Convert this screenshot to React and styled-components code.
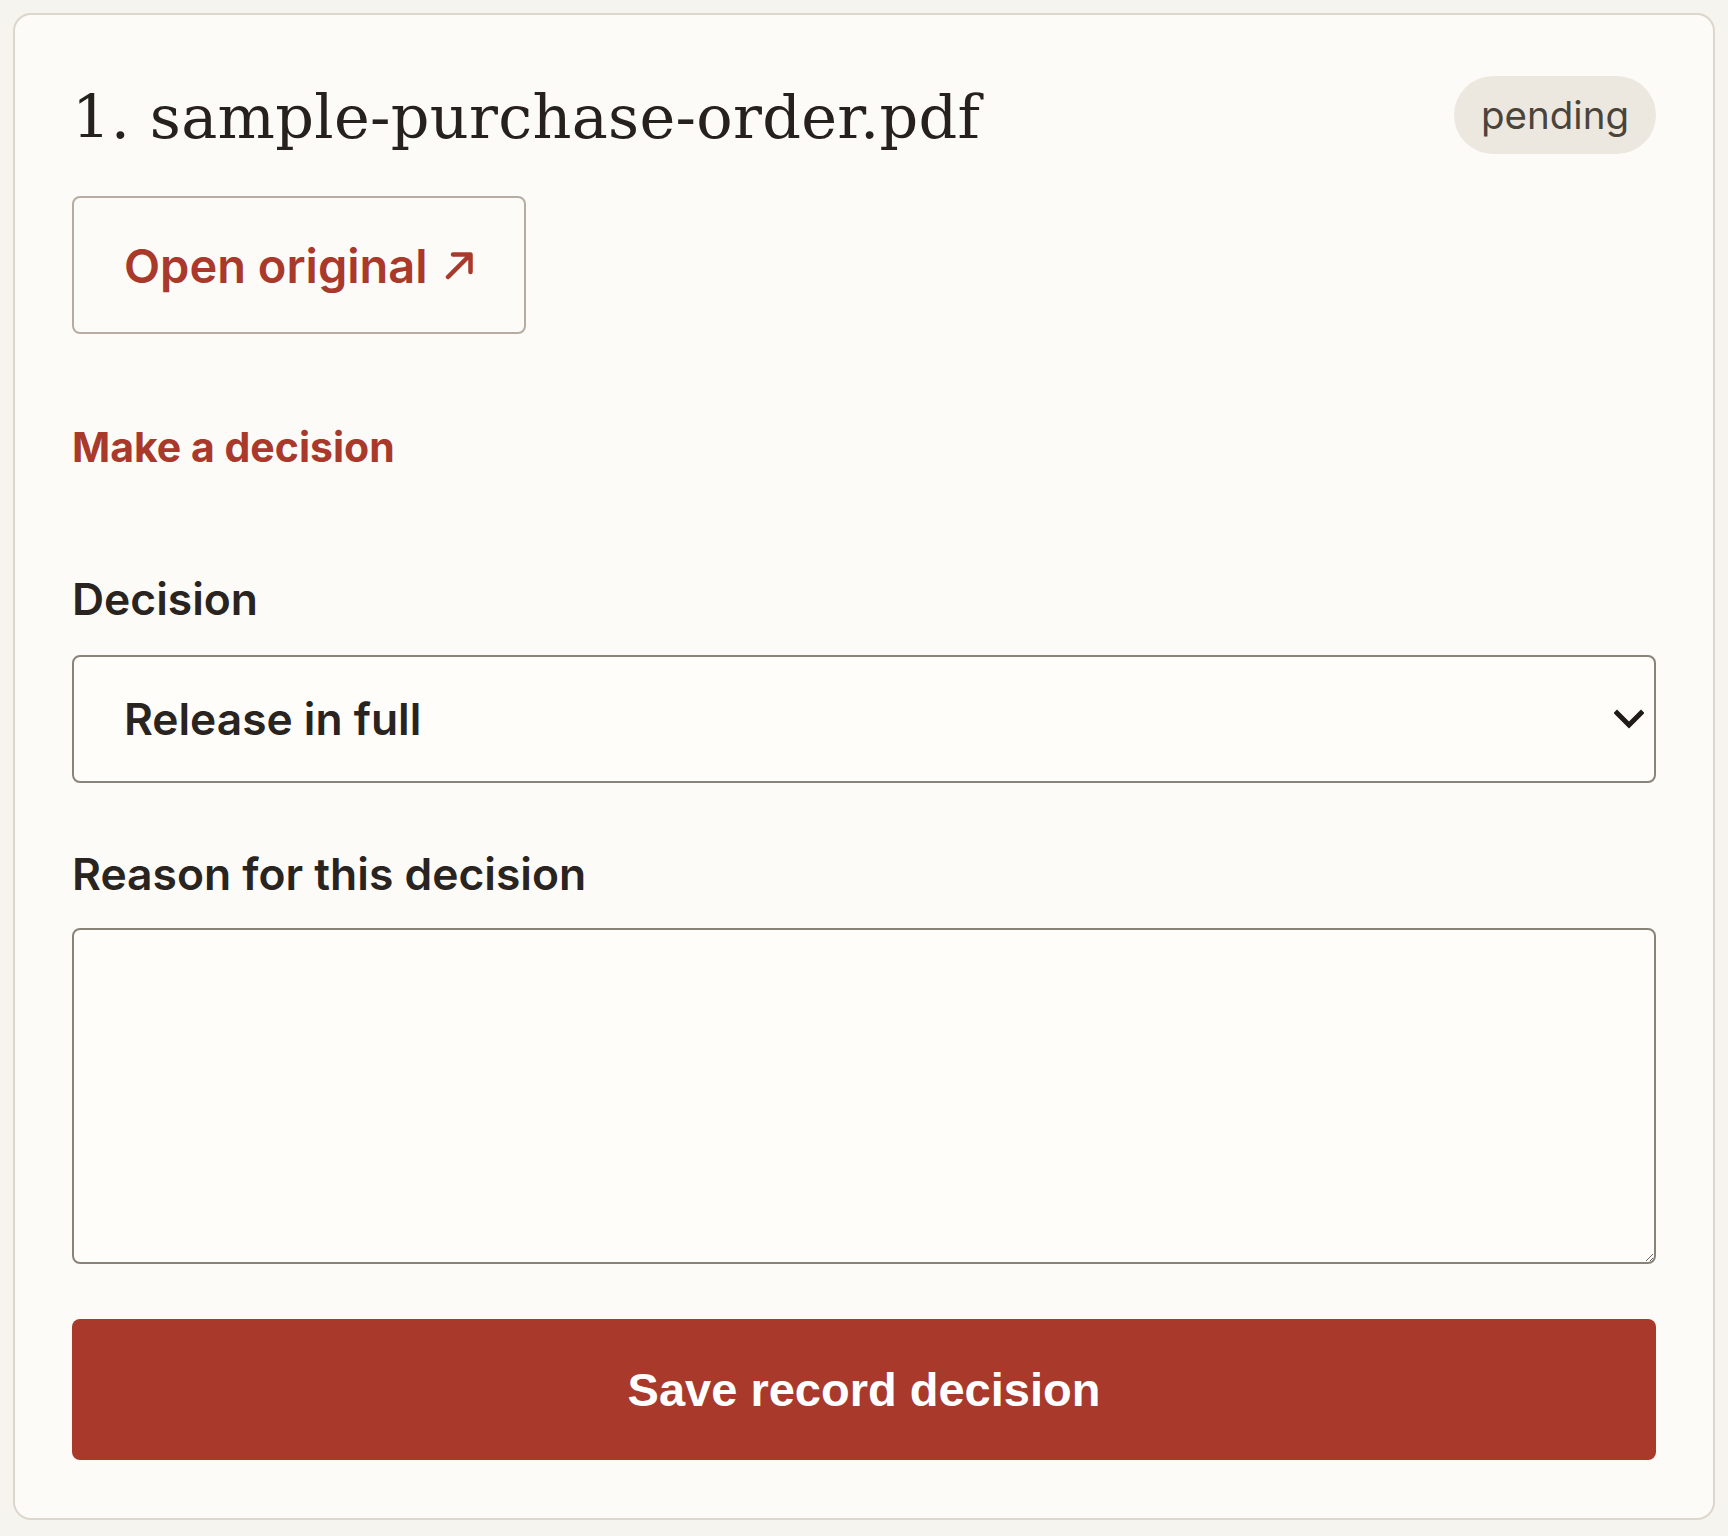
import React from "react";
import styled, { createGlobalStyle } from "styled-components";

const Global = createGlobalStyle`
  html, body { margin: 0; padding: 0; }
  body {
    background: #f6f4ef;
    padding: 13px;
    font-family: Inter, "Noto Sans", sans-serif;
    color: #29241f;
  }
  * { box-sizing: border-box; }
`;

const Card = styled.section`
  background: #fdfbf7;
  border: 2px solid #dcd7cc;
  border-radius: 18px;
  padding: 61px 57px 58px;
  display: flex;
  flex-direction: column;
`;

const Header = styled.div`
  display: flex;
  align-items: center;
  justify-content: space-between;
  min-height: 78px;
`;

const Title = styled.h2`
  margin: 0;
  padding-top: 4px;
  font-family: "DejaVu Serif", "Liberation Serif", serif;
  font-weight: 400;
  font-size: 60.5px;
  line-height: 1.2;
  letter-spacing: 0.3px;
  color: #26211c;
`;

const Pill = styled.span`
  display: inline-flex;
  align-items: center;
  height: 78px;
  padding: 0 27px;
  border-radius: 39px;
  background: #ede8df;
  color: #4b443b;
  font-size: 38.5px;
  font-weight: 400;
`;

const OpenLink = styled.a`
  align-self: flex-start;
  margin-top: 42px;
  display: inline-flex;
  align-items: center;
  gap: 15px;
  height: 138px;
  padding: 0 48px 0 50px;
  border: 2px solid #b6ada2;
  border-radius: 8px;
  color: #a8392b;
  font-size: 47px;
  font-weight: 600;
  text-decoration: none;
`;

const SectionTitle = styled.h3`
  margin: 90px 0 0;
  color: #a8392b;
  font-size: 41px;
  font-weight: 700;
  line-height: 46px;
`;

const Field = styled.div`
  display: flex;
  flex-direction: column;
  gap: ${(p) => p.$gap}px;
  margin-top: ${(p) => p.$top}px;
`;

const Label = styled.label`
  font-size: 44.4px;
  font-weight: 600;
  line-height: 52px;
  color: #29241f;
`;

const SelectWrap = styled.div`
  position: relative;
`;

const Select = styled.select`
  appearance: none;
  width: 100%;
  height: 128px;
  padding: 0 80px 0 50px;
  border: 2px solid #8a8379;
  border-radius: 8px;
  background: #fefdfa;
  color: #29241f;
  font-family: Inter, "Noto Sans", sans-serif;
  font-size: 44.3px;
  font-weight: 600;
  outline: none;
`;

const Chevron = styled.svg`
  position: absolute;
  right: 12px;
  top: 50%;
  transform: translateY(-50%);
  pointer-events: none;
`;

const TextArea = styled.textarea`
  width: 100%;
  height: 336px;
  border: 2px solid #8a8379;
  border-radius: 8px;
  background: #fefdfa;
  font-family: Inter, "Noto Sans", sans-serif;
  font-size: 40px;
  padding: 20px 24px;
  resize: vertical;
  outline: none;
  display: block;
`;

const SaveButton = styled.button`
  margin-top: 55px;
  height: 141px;
  width: 100%;
  border: none;
  border-radius: 8px;
  background: #a8392b;
  color: #ffffff;
  font-family: "Liberation Sans", Arial, sans-serif;
  font-size: 47px;
  font-weight: 700;
  cursor: pointer;
`;

export default function App() {
  return (
    <>
      <Global />
      <Card>
        <Header>
          <Title>1. sample-purchase-order.pdf</Title>
          <Pill>pending</Pill>
        </Header>
        <OpenLink href="#">
          Open original
          <svg width="33" height="33" viewBox="0 0 33 33" fill="none">
            <path d="M5 28 L27 6 M10 5.5 H27.5 V23" stroke="#a8392b" strokeWidth="4.5" strokeLinecap="round" strokeLinejoin="round" />
          </svg>
        </OpenLink>
        <SectionTitle>Make a decision</SectionTitle>
        <Field $top={103} $gap={30}>
          <Label htmlFor="decision">Decision</Label>
          <SelectWrap>
            <Select id="decision" defaultValue="release">
              <option value="release">Release in full</option>
              <option value="partial">Release in part</option>
              <option value="withhold">Withhold</option>
            </Select>
            <Chevron width="30" height="20" viewBox="0 0 30 20" fill="none">
              <path d="M3 4 L15 16 L27 4" stroke="#1f1b17" strokeWidth="5" strokeLinecap="square" />
            </Chevron>
          </SelectWrap>
        </Field>
        <Field $top={65} $gap={28}>
          <Label htmlFor="reason">Reason for this decision</Label>
          <TextArea id="reason" />
        </Field>
        <SaveButton type="button">Save record decision</SaveButton>
      </Card>
    </>
  );
}
